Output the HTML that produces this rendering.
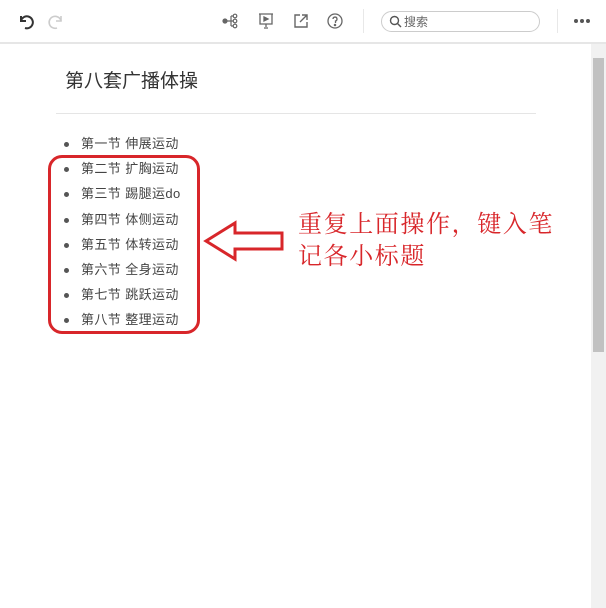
<!DOCTYPE html><html><head><meta charset="utf-8"><style>
body{margin:0;width:606px;height:608px;background:#fff;position:relative;overflow:hidden;font-family:"Liberation Sans","Noto Sans CJK SC",sans-serif}
.hdr{position:absolute;left:0;top:0;width:606px;height:42px;border-bottom:2px solid #e6e6e6;background:#fff}
.ab{position:absolute}
.sb{position:absolute;left:591px;top:44px;width:15px;height:564px;background:#f1f1f1}
.th{position:absolute;left:593px;top:58px;width:11px;height:294px;background:#c1c1c1}
h1{position:absolute;left:65px;top:66px;margin:0;font-size:19px;font-weight:normal;color:#333}
.hr{position:absolute;left:56px;top:113px;width:480px;height:1px;background:#e5e5e5}
ul{position:absolute;left:62px;top:133px;margin:0;padding:0;list-style:none}
li{font-size:13px;color:#444;height:25.2px;line-height:22px;position:relative;padding-left:19px;letter-spacing:0.4px}
li:before{content:"";position:absolute;left:2px;top:9px;width:5px;height:5px;border-radius:50%;background:#555}
.note{position:absolute;left:298px;top:209px;color:#d8262a;font-size:24px;line-height:32px;font-family:"Liberation Serif","Noto Serif CJK SC",serif;letter-spacing:1.6px}
</style></head><body>
<div class="hdr">
<svg class="ab" style="left:16px;top:12px" width="20" height="20" viewBox="0 0 20 20" fill="none" stroke="#333" stroke-width="2"><path d="M5 4v5h5"/><path d="M5 9a6 6 0 1 1 4 7"/></svg>
<svg class="ab" style="left:46px;top:12px" width="20" height="20" viewBox="0 0 20 20" fill="none" stroke="#ccc" stroke-width="1.6"><path d="M15 4v5h-5"/><path d="M15 9a6 6 0 1 0-4 7"/></svg>
<svg class="ab" style="left:222px;top:12px" width="18" height="18" viewBox="0 0 18 18" fill="none" stroke="#666" stroke-width="1.2"><circle cx="3" cy="9" r="2" fill="#666"/><path d="M5 9h4M9 4v10M9 4h2M9 9h2M9 14h2"/><circle cx="13" cy="4" r="1.8"/><circle cx="13" cy="9" r="1.8"/><circle cx="13" cy="14" r="1.8"/></svg>
<svg class="ab" style="left:257px;top:12px" width="18" height="18" viewBox="0 0 18 18" fill="none" stroke="#666" stroke-width="1.3"><path d="M2 2h14M3 2v10h12V2M9 12v3M7 16h4"/><path d="M7 5l4 2-4 2z" fill="#666"/></svg>
<svg class="ab" style="left:292px;top:12px" width="18" height="18" viewBox="0 0 18 18" fill="none" stroke="#666" stroke-width="1.4"><path d="M8 3H3v12h12v-5M10 3h5v5M15 3l-7 7"/></svg>
<svg class="ab" style="left:326px;top:12px" width="18" height="18" viewBox="0 0 18 18" fill="none" stroke="#666" stroke-width="1.3"><circle cx="9" cy="9" r="7"/><path d="M7 7a2 2 0 1 1 2.5 2v2"/><circle cx="9" cy="13" r=".6" fill="#666"/></svg>
<div class="ab" style="left:363px;top:9px;width:1px;height:24px;background:#e8e8e8"></div>
<div class="ab" style="left:381px;top:11px;width:157px;height:19px;border:1px solid #ccc;border-radius:11px"></div>
<svg class="ab" style="left:389px;top:15px" width="13" height="13" viewBox="0 0 13 13" fill="none" stroke="#555" stroke-width="1.4"><circle cx="5.5" cy="5.5" r="4"/><path d="M8.5 8.5l3.5 3.5"/></svg>
<div class="ab" style="left:404px;top:13px;font-size:12px;color:#666">搜索</div>
<div class="ab" style="left:557px;top:9px;width:1px;height:24px;background:#e8e8e8"></div>
<svg class="ab" style="left:573px;top:18px" width="18" height="6" viewBox="0 0 18 6" fill="#555"><circle cx="3" cy="3" r="2"/><circle cx="9" cy="3" r="2"/><circle cx="15" cy="3" r="2"/></svg>
</div>
<div class="sb"></div><div class="th"></div>
<h1>第八套广播体操</h1>
<div class="hr"></div>
<ul><li>第一节 伸展运动</li><li>第二节 扩胸运动</li><li>第三节 踢腿运do</li><li>第四节 体侧运动</li><li>第五节 体转运动</li><li>第六节 全身运动</li><li>第七节 跳跃运动</li><li>第八节 整理运动</li></ul>
<div class="ab" style="left:48px;top:155px;width:146px;height:173px;border:3px solid #d8262a;border-radius:14px"></div>
<svg class="ab" style="left:200px;top:218px" width="90" height="46" viewBox="0 0 90 46" fill="none" stroke="#d8262a" stroke-width="3"><path d="M6 23L35 5v10h47v16H35v10z" stroke-linejoin="miter"/></svg>
<div class="note">重复上面操作，键入笔<br>记各小标题</div>
</body></html>
